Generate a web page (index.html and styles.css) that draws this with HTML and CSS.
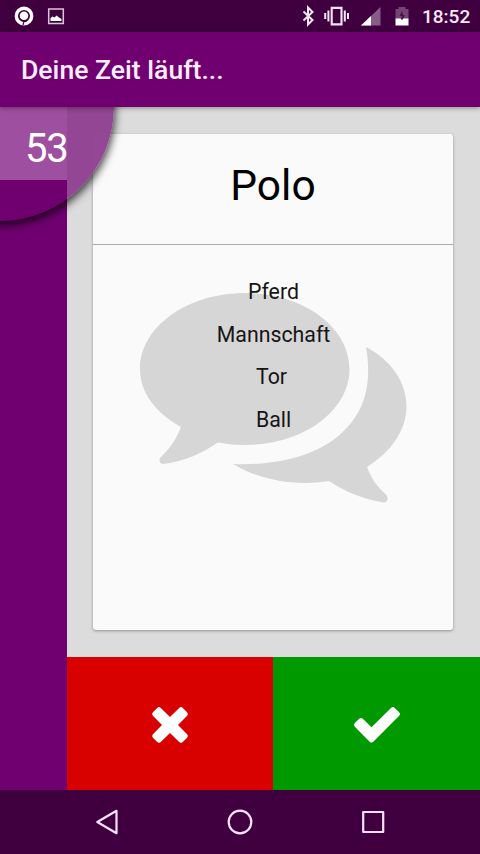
FILE: index.html
```html
<!DOCTYPE html>
<html lang="de">
<head>
<meta charset="utf-8">
<title>Deine Zeit läuft...</title>
<link rel="stylesheet" href="styles.css">
</head>
<body>
<div class="status">
  <svg class="status-left" width="80" height="32" viewBox="0 0 80 32">
    <circle cx="24" cy="16" r="7.700" fill="none" stroke="#fff" stroke-width="3.400"/>
    <circle cx="24" cy="15.700" r="4.300" fill="#fff"/>
    <path d="M23 25l1-3.500h2.500" fill="none" stroke="#400040" stroke-width="1.200"/>
    <path d="M48.700 9h14.600v14.600H48.700z" fill="none" stroke="#d9c6d9" stroke-width="1.500"/>
    <path d="M50.500 21v-3l2-1.500 2 1 2-2 2.500 2 2.500 1.500v2z" fill="#fff"/>
  </svg>
  <svg class="status-right" width="124" height="32" viewBox="296 0 124 32">
    <path d="M303.500 11.500l9 8.500-4.500 4.500V7.500l4.500 4.500-9 8.500" fill="none" stroke="#f3e6f3" stroke-width="2"/>
    <path d="M331.700 7.900h9.800v16.500h-9.800z" fill="none" stroke="#f3e6f3" stroke-width="2.100"/>
    <path d="M328.400 10.500v11M325.200 13v6M344.800 10.500v11M348 13v6" fill="none" stroke="#f3e6f3" stroke-width="2"/>
    <path d="M361 25.500L380.500 7v18.500z" fill="#875d87"/>
    <path d="M361 25.500l10-9.500v9.500z" fill="#fff"/>
    <path d="M395.500 9h3V7h7v2h3v10h-13z" fill="#734573"/>
    <path d="M402 11l-2.500 5h2v4h1.200l2-5H403z" fill="#4c104c"/>
    <path d="M395.500 18.500h5l1.500 1.500 1.500-1.500h5v7h-13z" fill="#fff"/>
  </svg>
  <span class="clock">18:52</span>
</div>
<header class="appbar">Deine Zeit läuft...</header>
<main class="game">
  <aside class="timebar"><div class="elapsed"></div></aside>
  <div class="content">
    <div class="board">
      <section class="card">
        <h1 class="term">Polo</h1>
        <div class="words">
          <svg class="bubbles" width="360" height="385" viewBox="93 245 360 385">
            <path fill="#d6d6d6" d="M245 293C303 293 349.500 327 349.500 369S303 445 245 445Q231 445 218 442.500C201 454 185 461 163 464Q158 463 160 458C169 449 175 442 181 427C156 413 140 393 140 369C140 327 187 293 245 293Z"/>
            <path fill="#d6d6d6" d="M366 347C391 360 406.500 382 406.500 406.500C406.500 430 391 452 367 467C372 480 377 486 386 494.500Q390 501 384 502.500C362 499 346 492 329 481Q317 483 306 483C278 483 253 476 233 464C286 466 328 452 351 423C368 402 371 375 366 347Z"/>
          </svg>
          <ul class="list">
            <li>Pferd</li>
            <li>Mannschaft</li>
            <li class="shifted">Tor</li>
            <li>Ball</li>
          </ul>
        </div>
      </section>
    </div>
    <div class="actions">
      <button class="btn wrong" aria-label="Falsch">
        <svg width="40" height="40" viewBox="0 0 40 40"><path fill="#fff" d="M7.200 2.900Q9 1.300 10.800 2.900L20 12 29.200 2.900Q31 1.300 32.800 2.900L37.100 7.200Q38.700 9 37.100 10.800L28 20 37.100 29.200Q38.700 31 37.100 32.800L32.800 37.100Q31 38.700 29.200 37.100L20 28 10.800 37.100Q9 38.700 7.200 37.100L2.900 32.800Q1.300 31 2.900 29.200L12 20 2.900 10.800Q1.300 9 2.900 7.200Z"/></svg>
      </button>
      <button class="btn right" aria-label="Richtig">
        <svg width="50" height="40" viewBox="0 0 50 40"><path fill="#fff" d="M7.200 13.700Q9 12.100 10.800 13.700L19.500 22.300 39 2.900Q41 1.300 42.800 2.900L47.200 7.200Q49 9 47.200 10.800L21.300 36.700Q19.500 38.400 17.700 36.700L2.800 21.800Q1.200 20 2.800 18.100Z"/></svg>
      </button>
    </div>
  </div>
  <div class="dial"></div>
  <span class="seconds">53</span>
</main>
<nav class="navbar">
  <svg width="480" height="64" viewBox="0 790 480 64" fill="none" stroke="#fbe3fb" stroke-width="2.200" stroke-linejoin="round">
    <path d="M97.300 822l19.200-11.200v22.400z"/>
    <circle cx="240" cy="822" r="11.300"/>
    <path d="M363.200 812h20v20h-20z"/>
  </svg>
</nav>
</body>
</html>
```
FILE: styles.css
```css
* { box-sizing: border-box; }
body {
  margin: 0;
  width: 480px;
  height: 854px;
  display: flex;
  flex-direction: column;
  overflow: hidden;
  font-family: Roboto, "Liberation Sans", sans-serif;
  background: #400040;
}
.status {
  height: 32px;
  display: flex;
  align-items: center;
  background: #400040;
}
.status-right { margin-left: auto; }
.clock {
  width: 60px;
  padding: 2px 0 0 2px;
  color: #f8eaf8;
  font-size: 19px;
  font-weight: 500;
  line-height: 34px;
}
.appbar {
  position: relative;
  z-index: 2;
  height: 75px;
  padding: 0 21px;
  background: #700070;
  color: #fdeefd;
  font-size: 26.600px;
  font-weight: 500;
  line-height: 75px;
  box-shadow: 0 1px 5px rgba(0, 0, 0, .4);
}
.game {
  position: relative;
  height: 683px;
  display: flex;
  overflow: hidden;
}
.timebar { width: 66.500px; background: #700070; }
.elapsed { height: 73px; background: #9f4f9f; }
.content {
  flex: 1;
  display: flex;
  flex-direction: column;
}
.board {
  flex: 1;
  padding: 27px 27px 27px 26.500px;
  background: #dcdcdc;
}
.card {
  height: 496px;
  background: #fafafa;
  border-radius: 3px;
  box-shadow: 0 1px 3px rgba(0, 0, 0, .35);
}
.term {
  height: 111px;
  margin: 0;
  border-bottom: 1px solid #aaa;
  color: #000;
  font-size: 42.500px;
  font-weight: 400;
  line-height: 103px;
  text-align: center;
}
.words { position: relative; height: 385px; }
.bubbles { position: absolute; inset: 0; }
.list {
  position: relative;
  margin: 0;
  padding: 26px 0 0 1px;
  list-style: none;
  color: #151515;
  font-size: 21.300px;
  line-height: 42.700px;
  text-align: center;
}
.shifted { padding-right: 4px; }
.actions { height: 133px; display: flex; }
.btn {
  flex: 1;
  display: flex;
  align-items: center;
  justify-content: center;
  padding: 2px 0 0;
  border: 0;
}
.wrong { background: #d90000; }
.right { background: #009900; }
.dial {
  position: absolute;
  left: -114px;
  top: -114px;
  width: 228px;
  height: 228px;
  border-radius: 50%;
  box-shadow: 1px 4px 9px rgba(0, 0, 0, .75);
}
.dial::before {
  content: "";
  position: absolute;
  inset: 0;
  border-radius: 50%;
  background: linear-gradient(to right, transparent 181px, rgba(144, 64, 144, .96) 181px);
}
.seconds {
  position: absolute;
  left: 25px;
  top: 17px;
  color: #fff;
  font-size: 40px;
  line-height: 50px;
  font-weight: 400;
  letter-spacing: -1.200px;
}
.navbar { height: 64px; background: #400040; }
.navbar svg { display: block; }
```
